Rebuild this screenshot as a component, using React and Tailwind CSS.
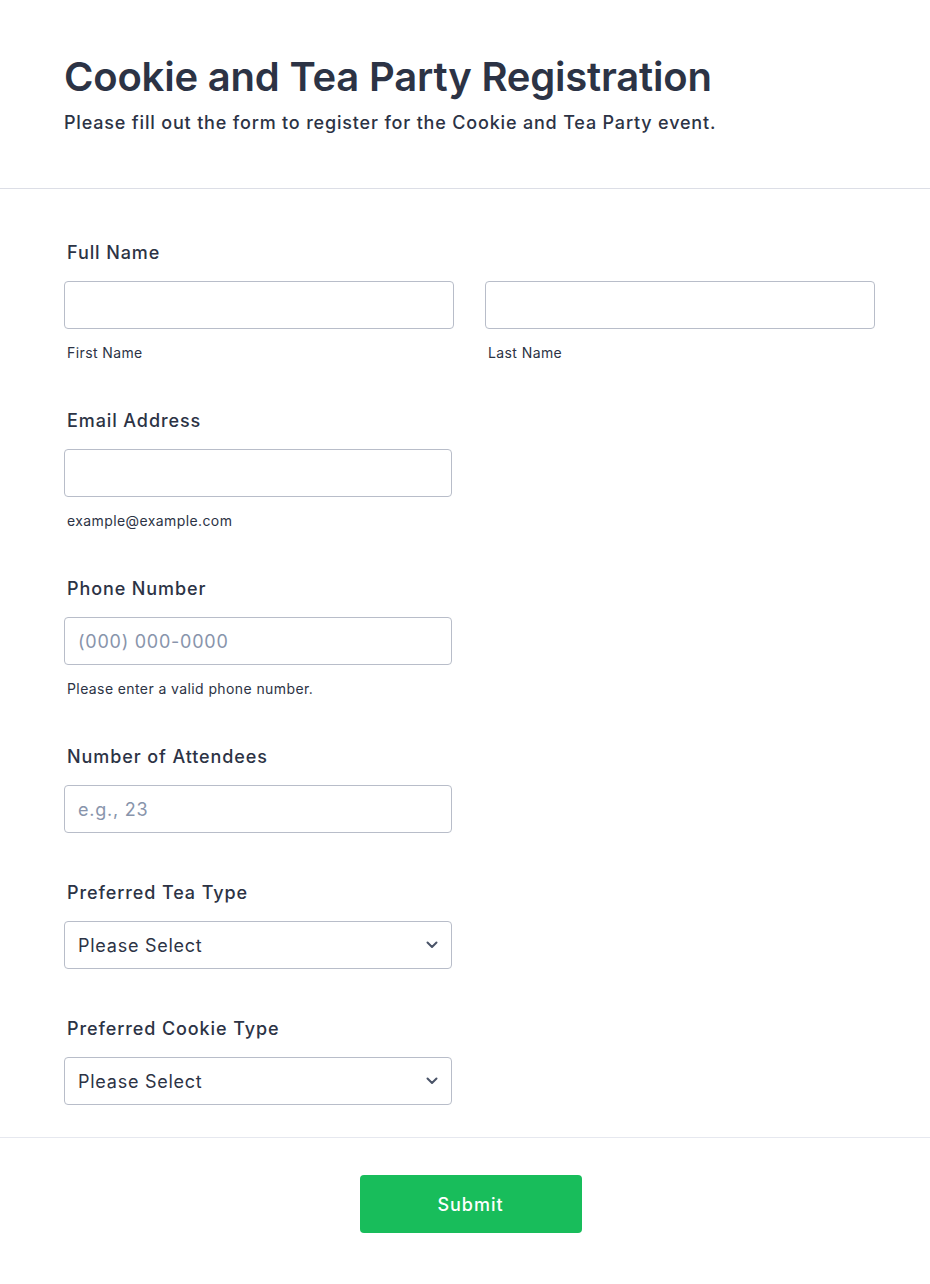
import React from "react";

const inputCls =
  "block h-[48px] w-full rounded-[4px] border border-[#b8bdc9] bg-white px-[13px] text-[18px] tracking-[0.75px] text-[#2c3345] outline-none placeholder:text-[#8894ab]";

function Label({ children }) {
  return (
    <label className="mb-[16px] block pl-[3px] pt-[2px] text-[18px] font-medium leading-[24px] tracking-[0.9px] text-[#2c3345]">
      {children}
    </label>
  );
}

function Sub({ children }) {
  return (
    <div className="mt-[15px] pl-[3px] pt-[1px] text-[14px] leading-[16px] tracking-[0.4px] text-[#2c3345]">
      {children}
    </div>
  );
}

function Chevron() {
  return (
    <svg
      className="pointer-events-none absolute right-[14px] top-1/2 -translate-y-1/2"
      width="12"
      height="8"
      viewBox="0 0 12 8"
      fill="none"
    >
      <path
        d="M1.5 1.5 6 6l4.5-4.5"
        stroke="#4a5468"
        strokeWidth="2"
        strokeLinecap="round"
        strokeLinejoin="round"
      />
    </svg>
  );
}

function SelectField({ label }) {
  return (
    <div className="w-[388px]">
      <Label>{label}</Label>
      <div className="relative">
        <select className={`${inputCls} appearance-none`} defaultValue="">
          <option value="">Please Select</option>
        </select>
        <Chevron />
      </div>
    </div>
  );
}

export default function App() {
  return (
    <div
      className="min-h-screen bg-white text-[#2c3345]"
      style={{ fontFamily: "Inter, 'Noto Sans', sans-serif" }}
    >
      <header className="border-b border-[#dcdee6] pb-[53px] pl-[64px] pr-[55px] pt-[53px]">
        <h1 className="text-[40px] font-semibold leading-[48px] tracking-[-0.2px]">
          Cookie and Tea Party Registration
        </h1>
        <p className="mt-[10px] text-[18px] font-medium leading-[24px] tracking-[0.82px]">
          Please fill out the form to register for the Cookie and Tea Party event.
        </p>
      </header>

      <form className="flex flex-col gap-[46px] border-b border-[#e6e8ef] pb-[32px] pl-[64px] pr-[55px] pt-[50px]">
        <div>
          <Label>Full Name</Label>
          <div className="grid grid-cols-2 gap-[31px]">
            <div>
              <input className={inputCls} type="text" />
              <Sub>First Name</Sub>
            </div>
            <div>
              <input className={inputCls} type="text" />
              <Sub>Last Name</Sub>
            </div>
          </div>
        </div>

        <div className="w-[388px]">
          <Label>Email Address</Label>
          <input className={inputCls} type="email" />
          <Sub>example@example.com</Sub>
        </div>

        <div className="w-[388px]">
          <Label>Phone Number</Label>
          <input className={inputCls} type="tel" placeholder="(000) 000-0000" />
          <Sub>Please enter a valid phone number.</Sub>
        </div>

        <div className="w-[388px]">
          <Label>Number of Attendees</Label>
          <input className={inputCls} type="text" placeholder="e.g., 23" />
        </div>

        <SelectField label="Preferred Tea Type" />
        <SelectField label="Preferred Cookie Type" />
      </form>

      <div className="flex justify-center pb-[50px] pl-[66px] pr-[55px] pt-[37px]">
        <button
          type="button"
          className="h-[58px] w-[222px] rounded-[4px] bg-[#18bd5b] text-[18px] font-medium tracking-[1px] text-white"
        >
          Submit
        </button>
      </div>
    </div>
  );
}
